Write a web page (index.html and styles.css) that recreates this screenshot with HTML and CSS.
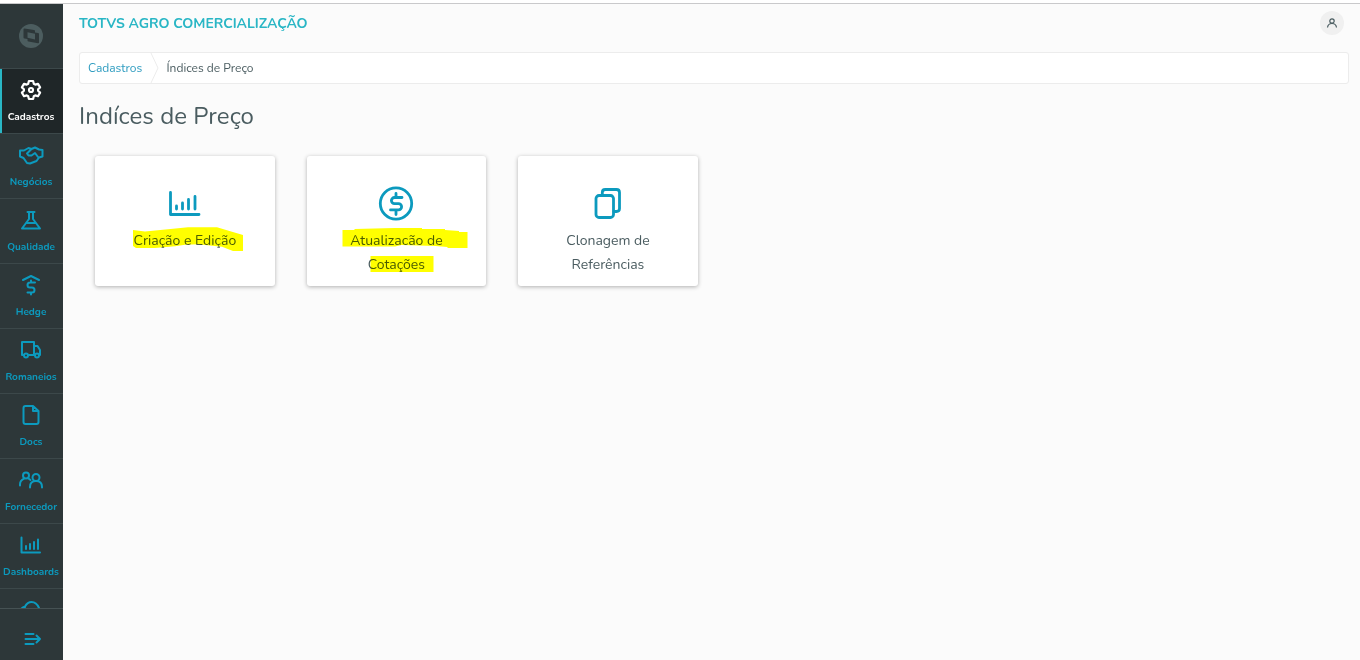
FILE: index.html
```html
<!DOCTYPE html>
<html lang="pt-BR">
<head>
    <meta charset="UTF-8">
    <meta name="viewport" content="width=device-width, initial-scale=1.0">
    <title>TOTVS Agro Comercialização</title>
    <link rel="stylesheet" href="styles.css">
</head>
<body>
    <div class="app">
        <!-- Side menu -->
        <nav class="sidebar">
            <div class="menu-logo">
                <svg width="24" height="24" viewBox="0 0 24 24">
                    <circle cx="12" cy="12" r="12" fill="#4c5d5f"/>
                    <path d="M4.500 5.500q0-1 1-1L15 6q1 .2 1 1v1.500l3 .6q1 .2 1 1v8.400q0 1-1 .8L9.500 17.500q-1-.2-1-1V15l-3-.6q-1-.2-1-1z" fill="#2d3739"/>
                    <path d="M8.500 8.200l7.500 1.600v5.600l-7.500-1.600z" fill="#4c5d5f"/>
                </svg>
            </div>
            <div class="menu-list">
                <a class="menu-item active">
                    <svg class="icon" width="24" height="24" viewBox="0 0 24 24">
                        <path stroke-width="2.200" d="M9.900 3h4.200l.7 2.700 1.500.9 2.700-.8 2.100 3.600-2 1.900v1.400l2 1.900-2.100 3.600-2.700-.8-1.500.9-.7 2.700H9.900l-.7-2.700-1.500-.9-2.700.8-2.100-3.600 2-1.900v-1.400l-2-1.900L5 5.800l2.700.8 1.500-.9z"/>
                        <circle cx="12" cy="12" r="2" stroke-width="2.200"/>
                    </svg>
                    <span class="menu-label">Cadastros</span>
                </a>
                <a class="menu-item">
                    <svg class="icon" width="26" height="24" viewBox="0 0 26 24">
                        <path d="M2 7.500h4L10.500 5l3 1L17 4.500l4 2 3.500.5v6.500L21 14.500 18.500 18 12 20.500l-3-.5-3.500-5-3.500-1.500zM13.500 6L9 10.500l1.500 2h3L17 10l3 4"/>
                    </svg>
                    <span class="menu-label">Negócios</span>
                </a>
                <a class="menu-item">
                    <svg class="icon" width="24" height="24" viewBox="0 0 24 24">
                        <path d="M8.500 4h7M10 4v7l-7 9.500h18L14 11V4M7.500 15h9"/>
                    </svg>
                    <span class="menu-label">Qualidade</span>
                </a>
                <a class="menu-item">
                    <svg class="icon" width="24" height="24" viewBox="0 0 24 24">
                        <path d="M4 7L12 3l8 4M16 9.500h-5a2.500 2.500 0 0 0 0 5h2a2.500 2.500 0 0 1 0 5H8.500M12 7.500v2M12 19.500v2"/>
                    </svg>
                    <span class="menu-label">Hedge</span>
                </a>
                <a class="menu-item">
                    <svg class="icon" width="24" height="24" viewBox="0 0 24 24">
                        <path d="M4.500 17H3V4h12v13H9M15 8h3.500l2.500 4v5h-1M15 17h1"/>
                        <circle cx="7" cy="17.500" r="2"/>
                        <circle cx="18" cy="17.500" r="2"/>
                    </svg>
                    <span class="menu-label">Romaneios</span>
                </a>
                <a class="menu-item">
                    <svg class="icon" width="24" height="24" viewBox="0 0 24 24">
                        <path d="M14 3H6.500Q4.500 3 4.500 5v14q0 2 2 2h11q2 0 2-2V8zM14 3v5h5.500"/>
                    </svg>
                    <span class="menu-label">Docs</span>
                </a>
                <a class="menu-item">
                    <svg class="icon" width="26" height="24" viewBox="0 0 26 24">
                        <circle cx="8" cy="7.500" r="3"/>
                        <circle cx="18" cy="9.500" r="3.500"/>
                        <path d="M2 17.500v-1q0-4 4-5.800M10.500 10.500l2 1.500M12 19.500v-.500q0-6 6-6t6 6v.5"/>
                    </svg>
                    <span class="menu-label">Fornecedor</span>
                </a>
                <a class="menu-item">
                    <svg class="icon" width="24" height="24" viewBox="0 0 24 24">
                        <path d="M2.500 4.500v15H21M7 13v3M11 11v5M15 9v7M19 6.500V16"/>
                    </svg>
                    <span class="menu-label">Dashboards</span>
                </a>
                <a class="menu-item">
                    <svg class="icon" width="24" height="24" viewBox="0 0 24 24">
                        <path d="M2.500 10.500L4.500 9l1.500 1M6 8.500Q8.500 4 12.500 4q5 0 7.500 6"/>
                    </svg>
                </a>
            </div>
            <div class="menu-toggle">
                <svg class="icon" width="18" height="14" viewBox="0 0 18 14">
                    <path d="M1.500 2h8M1.500 7h14.500M1.500 12h8M12.500 3.500L16 7l-3.500 3.500"/>
                </svg>
            </div>
        </nav>

        <!-- Page content -->
        <main class="content">
            <header class="toolbar">
                <span class="toolbar-title">TOTVS AGRO COMERCIALIZAÇÃO</span>
                <div class="avatar">
                    <svg width="12" height="12" viewBox="0 0 12 12">
                        <circle cx="6" cy="4" r="2.200"/>
                        <path d="M1.500 10.500q.5-4 4.500-4t4.500 4"/>
                    </svg>
                </div>
            </header>

            <div class="breadcrumb">
                <a class="breadcrumb-link">Cadastros</a>
                <svg class="breadcrumb-arrow" width="9" height="32" viewBox="0 0 9 32">
                    <path d="M.5 0L8 16 .5 32"/>
                </svg>
                <span>Índices de Preço</span>
            </div>

            <h1 class="page-title">Indíces de Preço</h1>

            <div class="cards">
                <div class="card">
                    <svg class="icon card-icon" width="36" height="36" viewBox="0 0 36 36">
                        <path d="M3.500 6.500v22H32"/>
                        <path d="M9.500 20v3M15.500 17v6M21.500 13.500V23M28 10.500V23"/>
                    </svg>
                    <p class="card-text">Criação e Edição</p>
                    <svg class="marker" viewBox="0 0 180 130">
                        <path d="M38 74l12 1.500 23-2.200 20-2h29l15 4.400 11 3.300v16h-10l-11-4.300-24-2.400-13 .4-10 1.600-20 1.700H41l-3-2z"/>
                    </svg>
                </div>

                <div class="card">
                    <svg class="icon card-icon" width="36" height="36" viewBox="0 0 36 36">
                        <circle cx="18" cy="17.500" r="15.700"/>
                        <path d="M24 11.500h-7.500a3.100 3.100 0 0 0 0 6.200h4a3.100 3.100 0 0 1 0 6.200H12.500M18 7.500v4M18 24.500v4"/>
                    </svg>
                    <p class="card-text">Atualizacão de<br>Cotações</p>
                    <svg class="marker" viewBox="0 0 180 130">
                        <path d="M35.500 74h12v-1l40-1H115v1h23v1l14 1v1h8.500v16h-20v-1l-12-1-34-1-6.500 1.500H35.500z"/>
                        <path d="M63.500 100h63v16h-63z"/>
                    </svg>
                </div>

                <div class="card">
                    <svg class="icon card-icon" width="36" height="36" viewBox="0 0 36 36">
                        <rect x="6" y="9.500" width="17.500" height="22" rx="3"/>
                        <path d="M12.300 9V6.500q0-3 3-3h11.200q3 0 3 3v16q0 3-3 3h-2.500"/>
                    </svg>
                    <p class="card-text">Clonagem de<br>Referências</p>
                </div>
            </div>
        </main>
    </div>
</body>
</html>
```

FILE: styles.css
```css
* {
    margin: 0;
    padding: 0;
    box-sizing: border-box;
}
body {
    font-family: "Nunito", "Lato", sans-serif;
    color: #4a5c60;
    background-color: #fff;
    overflow: hidden;
}
.app {
    display: flex;
    height: 657px;
    margin-top: 3px;
    border-top: 1px solid #c9c9cb;
    background-color: #fbfbfb;
}
.icon {
    fill: none;
    stroke: currentColor;
    stroke-width: 2;
    stroke-linecap: round;
    stroke-linejoin: round;
}

/* Side menu */
.sidebar {
    display: flex;
    flex-direction: column;
    width: 63px;
    flex-shrink: 0;
    background-color: #2d3739;
    color: #0c9abe;
}
.menu-logo {
    display: flex;
    justify-content: center;
    align-items: center;
    height: 64px;
    flex-shrink: 0;
    padding-right: 1px;
}
.menu-list {
    flex: 1;
    overflow: hidden;
}
.menu-item {
    display: flex;
    flex-direction: column;
    align-items: center;
    height: 65px;
    padding: 9px 1px 0 0;
    border-top: 1px solid #3c484a;
}
.menu-item.active {
    color: #fff;
    background-color: #1f2628;
    box-shadow: inset 2px 0 #29b6c5;
}
.menu-label {
    margin-top: 8px;
    font-size: 10px;
    line-height: 14px;
    font-weight: bold;
    white-space: nowrap;
}
.menu-toggle {
    display: flex;
    justify-content: center;
    align-items: center;
    height: 52px;
    padding: 9px 0 0 3px;
    border-top: 1px solid #465254;
}

/* Top bar */
.content {
    flex: 1;
    padding: 7px 11px 0 16px;
}
.toolbar {
    display: flex;
    justify-content: space-between;
    align-items: center;
    height: 24px;
    padding-right: 5px;
}
.toolbar-title {
    font-size: 14px;
    font-weight: bold;
    letter-spacing: -0.04px;
    color: #29b6c5;
    white-space: nowrap;
}
.avatar {
    display: flex;
    justify-content: center;
    align-items: center;
    width: 24px;
    height: 24px;
    border-radius: 50%;
    background-color: #f0f0f0;
}
.avatar svg {
    fill: none;
    stroke: #4a5c60;
    stroke-width: 1.2;
}

/* Breadcrumb */
.breadcrumb {
    display: flex;
    align-items: center;
    height: 32px;
    margin-top: 17px;
    padding-left: 8px;
    border: 1px solid #ececec;
    border-radius: 3px;
    background-color: #fff;
    font-size: 12px;
}
.breadcrumb-link {
    width: 62px;
    color: #2e9cc0;
}
.breadcrumb-arrow {
    margin-right: 7.5px;
    fill: none;
    stroke: #ececec;
}
.page-title {
    margin-top: 16px;
    font-size: 24px;
    line-height: 32px;
    font-weight: normal;
    letter-spacing: 0.06px;
}

/* Cards */
.cards {
    display: flex;
    gap: 31.8px;
    padding: 24px 0 0 16px;
}
.card {
    position: relative;
    width: 179.75px;
    height: 130px;
    padding-top: 30px;
    border-radius: 3px;
    background-color: #fff;
    box-shadow: 0 1px 4px rgba(0,0,0,0.3);
    text-align: center;
}
.card-icon {
    display: block;
    margin: 0 auto;
    color: #0c9abe;
    stroke-width: 2.8;
}
.card-text {
    margin-top: 7px;
    font-size: 14px;
    line-height: 24px;
}
.marker {
    position: absolute;
    top: 0;
    left: 0;
    width: 180px;
    height: 130px;
    fill: #ffff00;
    mix-blend-mode: multiply;
}
```
